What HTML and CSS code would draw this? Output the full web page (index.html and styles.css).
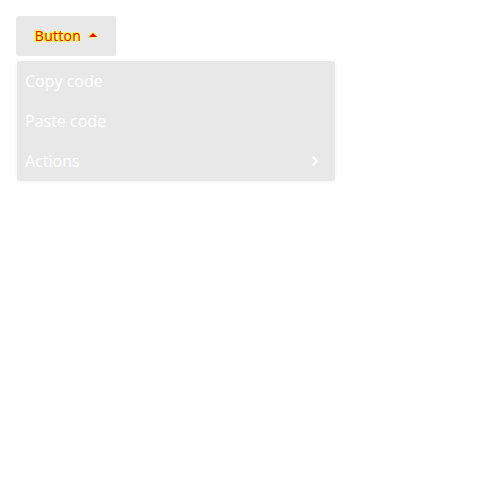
FILE: index.html
```html
<!DOCTYPE html>
<html>
<head>
<meta charset="utf-8">
<link rel="stylesheet" href="styles.css">
</head>
<body>
<div class="wrap">
  <button class="btn"><span class="btn-label">Button</span><span class="caret"></span></button>
  <ul class="menu">
    <li class="item">Copy code</li>
    <li class="item">Paste code</li>
    <li class="item"><span>Actions</span>
      <svg class="chev" width="8" height="12" viewBox="0 0 8 12"><path d="M1.5 1.5 L6 6 L1.5 10.5" fill="none" stroke="#fff" stroke-width="2"/></svg>
    </li>
  </ul>
</div>
</body>
</html>
```
FILE: styles.css
```css
html, body { margin: 0; padding: 0; background: #fff; }
body { font-family: "Open Sans", sans-serif; }
.wrap { padding: 16px; display: flex; flex-direction: column; align-items: flex-start; }
.btn {
  width: 100px; height: 40px; border: 0; border-radius: 2px;
  background: #e8e8e8; display: flex; align-items: center; justify-content: center; gap: 8px;
  font-family: "Open Sans", sans-serif; font-size: 14px; padding: 0 0 2px 0; margin: 0;
}
.btn-label {
  color: #f00; letter-spacing: 0.3px;
  text-shadow: 1px 0 #ff0, -1px 0 #ff0, 0 1px #ff0, 0 -1px #ff0;
}
.caret {
  width: 0; height: 0; border-left: 4px solid transparent; border-right: 4px solid transparent;
  border-bottom: 4px solid #f00; filter: drop-shadow(0 0 1px #ff0) drop-shadow(0 0 0.5px #ff0);
}
.menu {
  list-style: none; margin: 5px 0 0 1px; padding: 0; width: 318px;
  background: #e8e8e8; box-shadow: 0 1px 4px rgba(0,0,0,0.05); border-radius: 2px;
}
.item {
  height: 40px; display: flex; align-items: center; justify-content: space-between;
  padding: 0 16px 0 8px; color: #fff; font-size: 16px;
}
.chev { display: block; }
```
